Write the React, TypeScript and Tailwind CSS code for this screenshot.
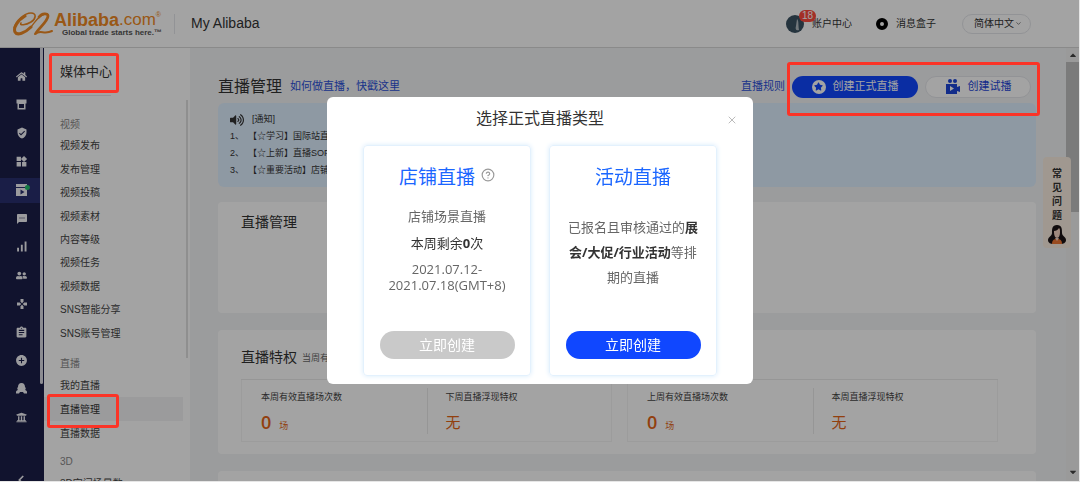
import {
  FaHome, FaUserFriends, FaUniversity, FaStar, FaVolumeUp, FaCaretUp, FaCaretDown,
} from "react-icons/fa";
import {
  MdWidgets, MdSignalCellularAlt, MdGamepad, MdSms, MdVerifiedUser, MdAssignment, MdAddCircle,
} from "react-icons/md";
import { ChevronDown, ChevronLeft, CircleHelp, X } from "lucide-react";

const cjk = "font-['Liberation_Sans','Noto_Sans_CJK_SC',sans-serif]";
const modalFont = "font-['Open_Sans','Noto_Sans_CJK_SC',sans-serif]";
const markClass =
  "pointer-events-none absolute z-20 rounded-[3px] border-[3px] border-[#fb3427]";

function LiveIcon() {
  return (
    <svg viewBox="0 0 15 12" className="ml-[2px] h-3 w-[15px]">
      <path d="M1 0h11v3H1z M1 4h11v8H1z" fill="#f3f3f8" />
      <path d="M5.5 5.5v5L9.5 8z" fill="#2a2f70" />
      <circle cx="12.4" cy="3.6" r="2.5" fill="#23c06e" />
    </svg>
  );
}

function ShopIcon() {
  return (
    <svg viewBox="0 0 11 11" className="size-[11px]" fill="currentColor">
      <path fillRule="evenodd" d="M.5.5h10v4H.5z M1.500 4.500h8v6h-8z M3 5v4h5V5z" />
    </svg>
  );
}

function StaffIcon() {
  return (
    <svg viewBox="0 0 11 11" className="size-[11px]" fill="currentColor">
      <path d="M5.500 0C8 0 9 2 9 4c1 1 1 2 0 3 1 0 2 1 2 2v1.500H8L7 9H4l-1 1.500H0V9c0-1 1-2 2-2-1-1-1-2 0-3 0-2 1-4 3.500-4z" />
    </svg>
  );
}

const RAIL = [
  { name: "首页", icon: <FaHome /> },
  { name: "店铺", icon: <ShopIcon /> },
  { name: "信用", icon: <MdVerifiedUser size={12} /> },
  { name: "应用", icon: <MdWidgets size={13} /> },
  { name: "媒体", icon: <LiveIcon />, active: true },
  { name: "消息", icon: <MdSms size={12} /> },
  { name: "数据", icon: <MdSignalCellularAlt size={15} /> },
  { name: "客户", icon: <FaUserFriends /> },
  { name: "营销", icon: <MdGamepad size={12} /> },
  { name: "订单", icon: <MdAssignment size={13} /> },
  { name: "物流", icon: <MdAddCircle size={13} /> },
  { name: "账号", icon: <StaffIcon /> },
  { name: "金融", icon: <FaUniversity /> },
];

const VIDEO_MENU = [
  "视频发布", "发布管理", "视频投稿", "视频素材", "内容等级",
  "视频任务", "视频数据", "SNS智能分享", "SNS账号管理",
];

const NOTICES = [
  "【☆学习】国际站直播学习中心",
  "【☆上新】直播SOP操作手册",
  "【☆重要活动】店铺直播活动报名",
];

const STATS = [
  [
    { label: "本周有效直播场次数", value: "0", unit: "场" },
    { label: "下周直播浮现特权", value: "无" },
  ],
  [
    { label: "上周有效直播场次数", value: "0", unit: "场" },
    { label: "本周直播浮现特权", value: "无" },
  ],
];

function Logo() {
  return (
    <a href="#" className="flex items-center text-[#f08a24]">
      <svg viewBox="0 0 42 26" className="h-[26px] w-[42px]" fill="none" stroke="currentColor" strokeLinecap="round">
        <path d="M9 12C7 15 14 14 19 11C24 8 25 2 19 2C13 2 4 9 2 17" strokeWidth="1.6" />
        <path d="M13 5C6 9 1 17 3 21C5 25 13 22 19 16" strokeWidth="3" />
        <path d="M19 16C24 10 27 4 33 3" strokeWidth="1.3" />
        <path d="M27 6C30 2 36 2 36 5C36 10 27 17 24 22" strokeWidth="2.8" />
        <path d="M23 23C28 18 32 24 40 20" strokeWidth="2" />
      </svg>
      <span className="block">
        <span className="flex items-start text-[18px] leading-[18px]">
          <b>Alibaba</b>
          <span className="text-[17px]">.com</span>
          <span className="text-[7px] leading-2">®</span>
        </span>
        <span className="block pl-2 text-[8px] leading-2 font-bold whitespace-nowrap text-[#555]">
          Global trade starts here.™
        </span>
      </span>
    </a>
  );
}

function Header() {
  return (
    <header className="flex h-12 shrink-0 items-center border-b border-[#d8d8d8] bg-white pr-12 pl-3 text-[#333]">
      <Logo />
      <span className="ml-3 h-5 border-l border-gray-200" />
      <span className="ml-4 text-[14px]">My Alibaba</span>
      <nav className="ml-auto flex items-center text-[10px]">
        <a href="#" className="relative flex items-center gap-2">
          <svg viewBox="0 0 18 18" className="size-[18px]">
            <circle cx="9" cy="9" r="9" fill="#3b5262" />
            <path d="M11 4c2 2 1 5 2 11-3 1-4-1-3-4z" fill="#b3bcc2" />
          </svg>
          账户中心
          <span className="absolute -top-[5px] left-[13px] flex h-3 w-[17px] items-center justify-center rounded-full bg-[#ff4a3d] text-[10px] text-white">
            18
          </span>
        </a>
        <a href="#" className="ml-6 flex items-center gap-2">
          <span className="size-3 rounded-full border-4 border-black bg-white" />
          消息盒子
        </a>
        <span className="relative ml-[26px] flex items-center">
          <select
            aria-label="语言"
            className="h-5 w-[69px] appearance-none rounded-full border border-gray-200 bg-white pl-[11px] text-[10px] leading-4"
          >
            <option>简体中文</option>
          </select>
          <ChevronDown size={7} className="pointer-events-none absolute right-[9px]" />
        </span>
      </nav>
    </header>
  );
}

function Rail() {
  return (
    <nav className="flex shrink-0 bg-[#1b1e48] text-[#f3f3f8]">
      <div className="flex w-10 flex-col pt-4">
        <div className="flex h-[366px] shrink-0 flex-col justify-between">
          {RAIL.map((item) => (
            <a
              key={item.name}
              href="#"
              aria-label={item.name}
              className={`flex h-[25px] items-center justify-center pl-[3px] text-[11px] ${
                item.active ? "bg-[#2a2f70]" : ""
              }`}
            >
              {item.icon}
            </a>
          ))}
        </div>
        <ChevronLeft size={14} strokeWidth={3} className="mt-[43px] ml-[14px] shrink-0" />
      </div>
      <div className="w-1">
        <div className="h-[336px] w-[3px] rounded-b-sm bg-[#dcdce4]" />
      </div>
    </nav>
  );
}

function SideMenu() {
  return (
    <aside className="flex w-[146px] shrink-0 flex-col bg-white text-[10px] text-[#444]">
      <div className="relative ml-4 flex h-12 w-[51px] shrink-0 items-center border-b border-gray-200 text-[13px] whitespace-nowrap text-[#333]">
        媒体中心
        <span className={`${markClass} top-[5px] -left-[11px] h-10 w-[70px]`} />
      </div>
      <div className="flex pt-1">
        <div className="min-w-0 flex-1">
          <h3 className="mt-[17px] h-4 pl-4 leading-4 text-[#888]">视频</h3>
          <ul className="grid h-[212px] auto-rows-fr pt-[1px]">
            {VIDEO_MENU.map((item) => (
              <li key={item} className="flex items-center pl-4">
                <a href="#">{item}</a>
              </li>
            ))}
          </ul>
          <h3 className="mt-[11px] h-4 pl-4 leading-4 text-[#888]">直播</h3>
          <ul className="mt-[1px]">
            <li className="flex h-6 items-center pl-4">
              <a href="#">我的直播</a>
            </li>
            <li className="relative flex h-6 items-center bg-[#f2f2f4] pl-4 text-[#333]">
              <a href="#">直播管理</a>
              <span className={`${markClass} -top-[3px] left-[3px] h-[34px] w-[72px]`} />
            </li>
            <li className="flex h-6 items-center pl-4">
              <a href="#">直播数据</a>
            </li>
          </ul>
          <h3 className="mt-[9px] h-4 pl-4 leading-4 text-[#888]">3D</h3>
          <a href="#" className="mt-[6px] block pl-4 leading-4">
            3D空间场景数
          </a>
        </div>
        <div className="mr-[2px] h-[258px] w-[5px] border-r-2 border-[#e0e0e0]" />
      </div>
    </aside>
  );
}

function Stats() {
  return (
    <div className="flex gap-[15px] border-t border-[#ebebeb]">
      {STATS.map((group) => (
        <div key={group[0].label} className="flex h-[62px] flex-1 items-center border border-t-0 border-[#f4f4f4]">
          {group.map((stat, i) => (
            <div
              key={stat.label}
              className={`h-[46px] flex-1 ${i ? "border-l border-[#ebebeb] pl-[18px]" : "pl-[19px]"}`}
            >
              <div className="h-[18px] text-[9px] leading-[18px] text-[#444]">{stat.label}</div>
              <div className={`mt-1 flex items-baseline gap-2 leading-6 text-[#e56516] ${modalFont}`}>
                <span className={stat.unit ? "text-[18px] font-semibold" : "text-[15px]"}>{stat.value}</span>
                {stat.unit && <span className="text-[9px]">{stat.unit}</span>}
              </div>
            </div>
          ))}
        </div>
      ))}
    </div>
  );
}

function Content() {
  return (
    <main className="min-w-0 flex-1 bg-[#f3f4f6] pr-[30px] pl-7 text-[#333]">
      <div className="relative flex h-[55px] items-center pt-[22px] pr-[5px]">
        <h1 className="text-[16px]">直播管理</h1>
        <a href="#" className="ml-2 text-[11px] text-[#2b50d8]">如何做直播，快戳这里</a>
        <a href="#" className="ml-auto text-[11px] text-[#2b50d8]">直播规则</a>
        <button className="ml-[7px] flex h-[22px] w-[126px] items-center justify-center gap-[7px] rounded-full bg-[#1047ff] text-[11px] text-white">
          <span className="flex size-[14px] items-center justify-center rounded-full bg-white text-[#1047ff]">
            <FaStar size={9} />
          </span>
          创建正式直播
        </button>
        <button className="ml-[7px] flex h-[22px] w-[106px] items-center justify-center gap-[7px] rounded-full border border-gray-200 bg-white text-[11px] text-[#1d45d8]">
          <svg viewBox="0 0 16 15" className="h-[15px] w-4" fill="currentColor">
            <circle cx="5" cy="2" r="2" />
            <circle cx="10" cy="2" r="2" />
            <path fillRule="evenodd" d="M1 5h11v3l3-1v6l-3-1v3H1z M5 7v5l4-2.500z" />
          </svg>
          创建试播
        </button>
        <span className={`${markClass} top-[14px] -right-[4px] h-[54px] w-[253px]`} />
      </div>

      <section className="h-[84px] rounded-md bg-[#dfefff] pt-2 pl-3 text-[9px] leading-[17px]">
        <div className="flex items-center gap-2">
          <FaVolumeUp size={14} />
          [通知]
        </div>
        <ol>
          {NOTICES.map((notice, i) => (
            <li key={notice} className="flex gap-1">
              <span>{i + 1}、</span>
              {notice}
            </li>
          ))}
        </ol>
      </section>

      <section className="mt-[15px] h-[111px] rounded bg-white pt-[10px] pl-[23px]">
        <h2 className="text-[14px] leading-5">直播管理</h2>
      </section>

      <section className="mt-[17px] h-[124px] rounded bg-white pt-[17px] pr-[38px] pl-[23px]">
        <h2 className="flex h-8 items-start gap-[5px] text-[14px] leading-5">
          直播特权
          <small className="text-[9px] leading-[22px] text-[#666]">当周有效直播场次数</small>
        </h2>
        <Stats />
      </section>

      <section className="mt-[17px] h-[100px] rounded bg-white" />
    </main>
  );
}

function Scrollbar() {
  return (
    <div className="flex w-[13px] shrink-0 flex-col items-center bg-[#f1f1f1] text-[10px] text-[#444]">
      <FaCaretUp className="my-[2px] shrink-0" />
      <div className="h-[150px] w-full bg-[#c1c1c1]" />
      <FaCaretDown className="mt-auto mb-1 shrink-0" />
    </div>
  );
}

function FaqTab() {
  return (
    <a
      href="#"
      className="absolute top-[157px] right-2 flex h-[91px] w-7 flex-col items-center rounded bg-[#faeee1] pt-[10px] text-[10px] font-bold text-[#333]"
    >
      <span className="w-[10px] leading-[14px]">常见问题</span>
      <svg viewBox="0 0 20 20" className="mt-[2px] size-5">
        <path d="M10 0C5 0 5 4 5 8c0 3-4 4-4 7 0 3 3 4 5 4h8c2 0 5-1 5-4 0-3-4-4-4-7 0-4 0-8-5-8z" fill="#1b1416" />
        <path d="M7 6c2 0 4-1 5-3 1 1 1 2 1 4 0 3-1 6-3 6s-3-3-3-6z" fill="#f8d5c4" />
        <path d="M5 19c0-4 2-5 5-5s5 1 5 5z" fill="#ef7632" />
        <path d="M8 13h4l-2 3z" fill="#f8d5c4" />
      </svg>
    </a>
  );
}

const cardClass =
  "flex h-[231px] w-[168px] flex-col items-center rounded border border-[#e3f1fd] pt-[18px] pb-4 text-center text-[13px] text-[#666] shadow-[0_0_5px_#d8ebfb]";
const createClass =
  "mt-auto h-7 w-[135px] shrink-0 rounded-full text-[14px] text-white";

function LiveTypeDialog() {
  return (
    <div className="fixed inset-0 z-30 flex items-center justify-center pb-[2px]">
      <div
        role="dialog"
        aria-labelledby="live-type-title"
        className={`relative h-[287px] w-[426px] rounded-md bg-white pt-[9px] ${modalFont}`}
      >
        <h2 id="live-type-title" className="text-center text-[16px] leading-6 text-[#333]">
          选择正式直播类型
        </h2>
        <button aria-label="关闭" className="absolute top-[17px] right-[15px] text-[#bbb]">
          <X size={12} strokeWidth={2} />
        </button>
        <div className="mt-[15px] flex justify-center gap-[18px]">
          <div className={cardClass}>
            <h3 className="flex items-start gap-[6px] text-[19px] leading-[26px] text-[#1b66ff]">
              店铺直播
              <CircleHelp size={14} strokeWidth={2} className="mt-1 text-[#999]" />
            </h3>
            <p className="mt-4 leading-5">店铺场景直播</p>
            <p className="mt-[7px] leading-5 text-[#333]">
              本周剩余<b>0</b>次
            </p>
            <p className="mt-2 leading-4">
              2021.07.12-
              <br />
              2021.07.18(GMT+8)
            </p>
            <button disabled className={`${createClass} bg-[#c9c9c9]`}>
              立即创建
            </button>
          </div>
          <div className={cardClass}>
            <h3 className="text-[19px] leading-[26px] text-[#1b66ff]">活动直播</h3>
            <p className="mt-[25px] w-[135px] leading-[25px]">
              已报名且审核通过的<b className="text-[#333]">展会/大促/行业活动</b>等排期的直播
            </p>
            <button className={`${createClass} bg-[#1047ff]`}>立即创建</button>
          </div>
        </div>
      </div>
    </div>
  );
}

export default function App() {
  return (
    <div className={`h-screen bg-[#e6e6e6] pr-px pb-px ${cjk}`}>
      <div className="relative flex h-full flex-col overflow-hidden">
        <Header />
        <div className="flex min-h-0 flex-1">
          <Rail />
          <SideMenu />
          <Content />
          <Scrollbar />
        </div>
        <FaqTab />
        <div className="absolute inset-0 z-10 bg-black/36" />
      </div>
      <LiveTypeDialog />
    </div>
  );
}
